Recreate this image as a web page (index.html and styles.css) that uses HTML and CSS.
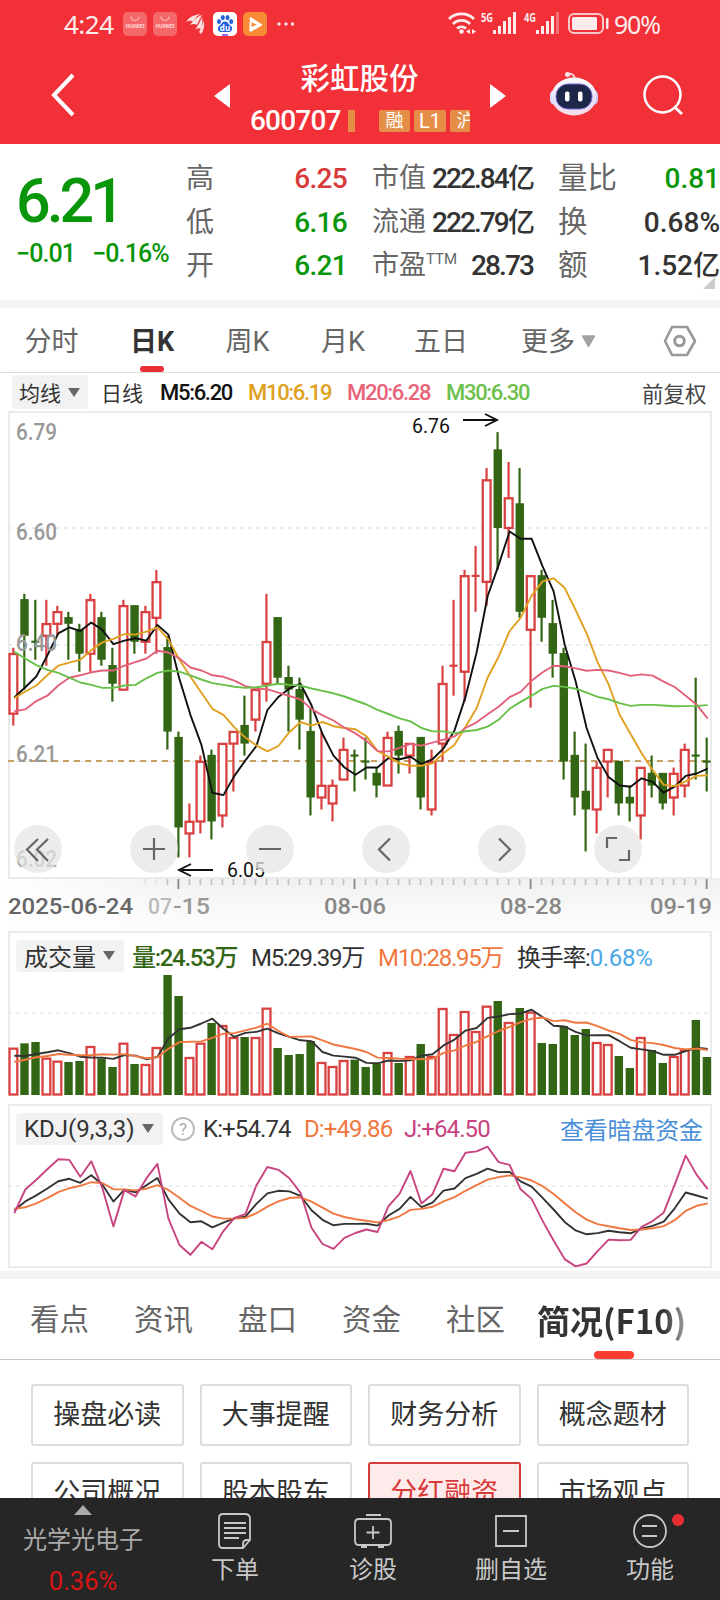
FILE: index.html
```html
<!DOCTYPE html>
<html lang="zh-CN">
<head>
    <meta charset="UTF-8">
    <meta name="viewport" content="width=device-width, initial-scale=1.0">
    <title>彩虹股份 600707</title>
    <link rel="stylesheet" href="styles.css">
</head>
<body>
    <header class="header">
        <!-- 状态栏 -->
        <div class="status">
            <span class="time">4:24</span>
            <svg class="app" width="24" height="24"><rect width="24" height="24" rx="5" fill="#f5686a"/><path d="M8 4.500a4 4 0 0 0 8 0" fill="none" stroke="#fbb" stroke-width="1.200"/><text x="12" y="16" font-size="5" font-weight="bold" text-anchor="middle" textLength="19" lengthAdjust="spacingAndGlyphs" fill="#fdd">HUAWEI</text></svg>
            <svg class="app" width="24" height="24"><rect width="24" height="24" rx="5" fill="#f5686a"/><path d="M8 4.500a4 4 0 0 0 8 0" fill="none" stroke="#fbb" stroke-width="1.200"/><text x="12" y="16" font-size="5" font-weight="bold" text-anchor="middle" textLength="19" lengthAdjust="spacingAndGlyphs" fill="#fdd">HUAWEI</text></svg>
            <svg class="app" width="24" height="24" fill="#fde3e3"><path d="M3 10Q7 3 18 2Q12 5 10 9Q6 8 3 10zM7 13Q12 5 19 3Q16 8 14 13Q11 11 7 13zM12 18Q17 11 19 5Q20 9 18 17Q15 15 12 18zM16 20Q20 14 20 8Q23 15 18 22z"/></svg>
            <svg class="app" width="24" height="24"><rect width="24" height="24" rx="5" fill="#fff"/><g fill="#2260dc"><ellipse cx="6" cy="9.500" rx="2" ry="2.600"/><ellipse cx="9.800" cy="5.600" rx="2" ry="2.600"/><ellipse cx="14.500" cy="5.600" rx="2" ry="2.600"/><ellipse cx="18.200" cy="9.500" rx="2" ry="2.600"/><path d="M12 9.500c3 0 3.500 3 6 4.500 2 2 1 6-2 6H8c-3 0-4-4-2-6 2.500-1.500 3-4.500 6-4.500z"/></g><text x="12" y="18.500" font-size="8" font-weight="bold" text-anchor="middle" fill="#fff">du</text><path d="M9 23h6" stroke="#7a3bdc" stroke-width="1.500"/></svg>
            <svg class="app" width="24" height="24"><rect width="24" height="24" rx="5" fill="#f98a36"/><path d="M7.500 6v3l8 3.500-8 4v2.500l11-6.200z" fill="#fff" stroke="#fff" stroke-width="1.500" stroke-linejoin="round"/><path d="M7.500 10v9" stroke="#fff" stroke-width="2"/></svg>
            <svg class="more" width="20" height="24" fill="#fde3e3"><circle cx="3" cy="12" r="1.700"/><circle cx="10" cy="12" r="1.700"/><circle cx="16.500" cy="12" r="1.700"/></svg>
            <svg class="signals" width="162" height="26" fill="#fdecec">
                <g fill="none" stroke="#fdecec" stroke-width="2.800"><path d="M1 8a18 18 0 0 1 25 0M5 13a12 12 0 0 1 17 0M9 17.500a7 7 0 0 1 9 0"/></g>
                <circle cx="13.500" cy="20.500" r="2.300"/><path d="M18 20.500l4-2.500v5zM28 20.500l-4-2.500v5z"/>
                <text x="33" y="10.500" font-size="12.500" font-weight="bold" textLength="12" lengthAdjust="spacingAndGlyphs">5G</text>
                <rect x="45" y="19" width="3" height="4"/><rect x="50" y="15" width="3" height="8"/><rect x="55" y="10" width="3" height="13"/><rect x="60" y="6" width="3" height="17"/><rect x="65" y="1" width="3" height="22"/>
                <text x="76" y="10.500" font-size="12.500" font-weight="bold" textLength="12" lengthAdjust="spacingAndGlyphs">4G</text>
                <rect x="88" y="19" width="3" height="4"/><rect x="93" y="15" width="3" height="8"/><rect x="98" y="10" width="3" height="13"/><rect x="103" y="5" width="3" height="18"/><rect x="108" y="1" width="3" height="22" opacity=".35"/>
                <rect x="121" y="3" width="34" height="19" rx="5" fill="none" stroke="#fbc8c8" stroke-width="2"/><rect x="124" y="6" width="25" height="13" rx="1.500"/><rect x="158" y="7" width="2.500" height="11" rx="1"/>
            </svg>
            <span class="battery">90%</span>
        </div>
        <!-- 标题 -->
        <div class="titlebar">
            <svg class="back" width="24" height="44" fill="none" stroke="#fff" stroke-width="4"><path d="M22 2L3 22L22 42"/></svg>
            <svg class="prev" width="16" height="24" fill="#fff"><path d="M16 0v24L0 12z"/></svg>
            <div class="title">
                <div class="name">彩虹股份</div>
                <div class="code"><span>600707</span><i></i><b class="tag t1">融</b><b class="tag t2">L1</b><b class="tag t3">沪</b></div>
            </div>
            <svg class="next" width="16" height="24" fill="#fff"><path d="M0 0v24l16-12z"/></svg>
            <svg class="robot" width="48" height="46">
                <defs><linearGradient id="rb" x2="0" y2="1"><stop stop-color="#fff"/><stop offset=".6" stop-color="#e4e0fb"/><stop offset="1" stop-color="#f6dfe6"/></linearGradient></defs>
                <path d="M18 3q6-1 7 5" fill="none" stroke="#f7d3dd" stroke-width="2"/><circle cx="17.500" cy="3.500" r="2.500" fill="#fde6ea"/>
                <rect x="0" y="19" width="10" height="15" rx="5" fill="#d9deff"/><rect x="38" y="19" width="10" height="15" rx="5" fill="#cfc6f8"/>
                <ellipse cx="24" cy="25.500" rx="22.500" ry="19" fill="url(#rb)"/>
                <rect x="6" y="13" width="36" height="25" rx="12" fill="#1d2748" stroke="#7769d8" stroke-width="1"/>
                <rect x="15" y="20.500" width="4.500" height="10" rx="2" fill="#fff"/><rect x="28" y="20.500" width="4.500" height="10" rx="2" fill="#fff"/>
            </svg>
            <svg class="search" width="42" height="42" fill="none" stroke="#fff" stroke-width="2.500"><circle cx="19.500" cy="19.500" r="18"/><path d="M31 31.500L39 39" stroke-width="3"/></svg>
        </div>
    </header>

    <!-- 行情 -->
    <section class="quote">
        <div class="price down">
            <div class="now">6.21</div>
            <div class="diff"><span>−0.01</span><span>−0.16%</span></div>
        </div>
        <dl class="stats s1">
            <div><dt>高</dt><dd class="up">6.25</dd></div>
            <div><dt>低</dt><dd class="down">6.16</dd></div>
            <div><dt>开</dt><dd class="down">6.21</dd></div>
        </dl>
        <dl class="stats s2">
            <div><dt>市值</dt><dd>222.84<em>亿</em></dd></div>
            <div><dt>流通</dt><dd>222.79<em>亿</em></dd></div>
            <div><dt>市盈<sup>TTM</sup></dt><dd>28.73</dd></div>
        </dl>
        <dl class="stats s3">
            <div><dt>量比</dt><dd class="down">0.81</dd></div>
            <div><dt>换</dt><dd>0.68%</dd></div>
            <div><dt>额</dt><dd>1.52<em>亿</em></dd></div>
        </dl>
        <svg class="corner" width="12" height="12"><path d="M12 0v12H0z" fill="#ccc"/></svg>
    </section>

    <nav class="periods">
        <span>分时</span>
        <span class="active">日K</span>
        <span>周K</span>
        <span>月K</span>
        <span>五日</span>
        <span class="drop">更多<svg width="15" height="13"><path d="M1.500 1h12L7.500 11.500z" fill="#a3a3a3" stroke="#a3a3a3" stroke-width="1.500" stroke-linejoin="round"/></svg></span>
        <span class="gear"><svg width="34" height="32" fill="none" stroke="#999" stroke-width="2.600" stroke-linejoin="round"><path d="M9 2h15l8 14-8 14H9L2 16z"/><circle cx="16.500" cy="16" r="4.800" stroke-width="3"/></svg></span>
    </nav>

    <!-- K线 -->
    <div class="legend main">
        <span class="chip">均线<svg width="12" height="9"><path d="M0 0h12L6 9z" fill="#666"/></svg></span>
        <span class="l1">日线</span>
        <span class="l2">M5:6.20</span>
        <span class="l3">M10:6.19</span>
        <span class="l4">M20:6.28</span>
        <span class="l5">M30:6.30</span>
        <span class="right">前复权</span>
    </div>
    <div class="kline">
        <svg id="kline" width="720" height="519" viewBox="0 411 720 519"></svg>
        <div class="tools">
            <svg viewBox="0 0 48 48"><path d="M24 14L13 24.500L24 36M34 14L23 24.500L34 36"/></svg>
            <svg viewBox="0 0 48 48"><path d="M13 24h22M24 13v22"/></svg>
            <svg viewBox="0 0 48 48"><path d="M13 24h22"/></svg>
            <svg viewBox="0 0 48 48"><path d="M28 13.500L17 24.500L28 35.500"/></svg>
            <svg viewBox="0 0 48 48"><path d="M21 13.500L32 24.500L21 35.500"/></svg>
            <svg viewBox="0 0 48 48"><path d="M13 23V13h10M35 25v10H25"/></svg>
        </div>
    </div>

    <!-- 成交量 -->
    <div class="panel volume">
        <div class="legend">
            <span class="chip">成交量<svg width="12" height="9"><path d="M0 0h12L6 9z" fill="#666"/></svg></span>
            <span class="v1">量:24.53万</span>
            <span class="v2">M5:29.39万</span>
            <span class="v3">M10:28.95万</span>
            <span class="v4">换手率:<em>0.68%</em></span>
        </div>
        <svg id="volume" width="720" height="125" viewBox="0 972 720 125"></svg>
    </div>

    <div class="panel kdj">
        <div class="legend">
            <span class="chip">KDJ(9,3,3)<svg width="12" height="9"><path d="M0 0h12L6 9z" fill="#666"/></svg></span>
            <span class="help">?</span>
            <span class="k1">K:+54.74</span>
            <span class="k2">D:+49.86</span>
            <span class="k3">J:+64.50</span>
            <span class="link">查看暗盘资金</span>
        </div>
        <svg id="kdj" width="720" height="123" viewBox="0 1144 720 123"></svg>
    </div>

    <nav class="sections">
        <span>看点</span><span>资讯</span><span>盘口</span><span>资金</span><span>社区</span><span class="active">简况(F10)</span>
    </nav>

    <div class="topics">
        <a>操盘必读</a><a>大事提醒</a><a>财务分析</a><a>概念题材</a>
        <a>公司概况</a><a>股本股东</a><a class="active">分红融资</a><a>市场观点</a>
    </div>

    <footer class="footer">
        <div class="board"><svg width="18" height="10"><path d="M9 0l9 10H0z" fill="#aaa"/></svg><span>光学光电子</span><strong>0.36%</strong></div>
        <div class="item"><svg width="36" height="38"><path d="M6 2h22q5 0 5 5v21l-7 8H6q-4 0-4-4V6q0-4 4-4zM33 28h-3q-4 0-4 4v4M7 11h22M7 16h22M7 21h22M7 26h15"/></svg><span>下单</span></div>
        <div class="item"><svg width="40" height="38"><path d="M13 3h15M6 7h28q4 0 4 4v18q0 4-4 4H6q-4 0-4-4V11q0-4 4-4zM20 14v13M13.500 20.500h13M8 35h6M25 35h6"/></svg><span>诊股</span></div>
        <div class="item"><svg width="36" height="38"><path d="M3 4h30v30H3zM10 19h16"/></svg><span>删自选</span></div>
        <div class="item"><svg width="36" height="38"><circle cx="18" cy="19" r="16"/><path d="M10 14h15M10 24h15"/></svg><i class="dot"></i><span>功能</span></div>
    </footer>

    <script src="chart.js"></script>
</body>
</html>
```
FILE: styles.css
```css
* {
    box-sizing: border-box;
}

body {
    margin: 0;
    width: 720px;
    height: 1600px;
    overflow: hidden;
    position: relative;
    background: #fff;
    color: #333;
    font-family: Roboto, "Noto Sans CJK SC", sans-serif;
}

svg {
    display: block;
    flex: none;
}

em, i {
    font-style: normal;
}

.up { color: #d83a3a; }
.down { color: #0a960a; }

/* 顶部 */
.header {
    height: 144px;
    background: #f23038;
    color: #fff;
}

.status {
    display: flex;
    align-items: center;
    height: 48px;
    padding-left: 64px;
    color: #fdecec;
    font-family: "Noto Sans", sans-serif;
}

.time {
    width: 59px;
    font-size: 26px;
    letter-spacing: -0.5px;
}

.app { margin-right: 6px; }
.more { margin-left: 3px; }
.signals { margin-left: 152px; }

.battery {
    margin-left: 4px;
    font-size: 25px;
    letter-spacing: -1.2px;
}

.titlebar {
    display: flex;
    height: 96px;
}

.back { margin: 25px 0 0 51px; }
.prev { margin: 36px 0 0 139px; }

.title {
    width: 220px;
    margin-left: 20px;
    overflow: hidden;
}

.name {
    height: 59px;
    line-height: 63px;
    font-size: 29.500px;
    font-weight: 500;
    text-align: center;
    text-indent: -1px;
}

.code {
    display: flex;
    width: 240px;
    height: 27px;
    align-items: center;
    font-size: 28px;
    font-weight: 500;
    letter-spacing: -0.8px;
}

.code span { width: 98px; }

.code i {
    width: 7px;
    height: 22px;
    margin-right: 24px;
    background: #e58e48;
}

.tag {
    height: 22px;
    margin-right: 4px;
    background: #e58e48;
    border-radius: 2px;
    font-size: 18px;
    font-weight: 400;
    line-height: 22px;
    text-align: center;
    letter-spacing: 0;
}

.t1 { width: 31px; }
.t2 { width: 32px; font-size: 20px; }
.t3 { width: 31px; }
.next { margin: 36px 0 0 20px; }
.robot { margin: 23px 0 0 44px; }
.search { margin: 27px 0 0 45px; }

/* 行情 */
.quote {
    display: flex;
    position: relative;
    height: 164px;
    border-bottom: 8px solid #f4f4f4;
}

.price {
    width: 186px;
    padding: 25px 0 0 16px;
    white-space: nowrap;
}

.now {
    height: 64px;
    line-height: 64px;
    font-size: 61px;
    font-weight: 500;
    letter-spacing: -4px;
}

.diff {
    display: flex;
    gap: 17px;
    height: 38px;
    line-height: 41px;
    font-size: 25px;
    font-weight: 500;
    letter-spacing: -0.9px;
}

.stats {
    margin: 13px 0 0;
}

.stats div {
    display: flex;
    justify-content: space-between;
    height: 43.500px;
    line-height: 43px;
    white-space: nowrap;
}

.stats dt {
    color: #666;
    font-size: 28px;
}

.stats dd {
    margin: 0;
    font-size: 28px;
    font-weight: 500;
    letter-spacing: -0.7px;
}

.s1 { width: 161px; }

.s2 {
    width: 161px;
    margin-left: 25px;
}

.s2 dt { font-size: 27px; }
.s2 dd { letter-spacing: -1.9px; }

.s3 {
    width: 162px;
    margin-left: 25px;
}

.s3 dt { font-size: 29.500px; }
.s3 dd { letter-spacing: 0; }

.stats em { font-size: 27px; }

sup {
    font-size: 15px;
    line-height: 1;
    vertical-align: 10px;
}

.corner {
    position: absolute;
    left: 703px;
    bottom: 11px;
}

/* 周期 */
.periods {
    display: grid;
    grid-template-columns: 103px 98px 93px 98px 98px 155px 75px;
    height: 65px;
    border-bottom: 1px solid #ddd;
    line-height: 69px;
    font-size: 27px;
    text-align: center;
    color: #666;
}

.periods .active {
    color: #333;
    font-weight: 700;
}

.periods .active::after {
    content: "";
    display: block;
    width: 24px;
    height: 6px;
    margin: -11px auto 0;
    border-radius: 3px;
    background: #e62e33;
}

.drop {
    display: flex;
    align-items: center;
    gap: 6px;
    padding-left: 31px;
}

.gear {
    display: flex;
    align-items: center;
    padding-left: 18px;
}

.drop svg, .gear svg { margin-bottom: 3px; }

/* 指标行 */
.legend {
    display: flex;
    align-items: center;
    white-space: nowrap;
    font-size: 24px;
    letter-spacing: -1.300px;
}

.chip {
    display: flex;
    align-items: center;
    justify-content: space-between;
    flex: none;
    padding: 0 9px 0 8px;
    border-radius: 4px;
    background: #f2f2f2;
    letter-spacing: 0;
}

.main {
    height: 38px;
    padding-left: 12px;
    font-size: 22px;
    color: #111;
}

.main .chip {
    width: 76px;
    height: 34px;
    padding: 0 8px 0 7px;
    font-size: 21px;
    color: #333;
}

.l1 { width: 72px; padding-left: 13px; font-size: 21px; letter-spacing: 0; color: #333; }
.l2, .l3, .l4, .l5 { font-weight: 500; }
.l2 { width: 88px; }
.l3 { width: 99px; color: #e0a020; }
.l4 { width: 99px; color: #e8647a; }
.l5 { width: 96px; color: #6cbf4a; }
.main .right { margin-left: 100px; font-size: 21.500px; letter-spacing: 0; color: #444; }

.kline {
    position: relative;
    height: 520px;
}

/* 浮在K线上的按钮 */
.tools {
    position: absolute;
    left: 14px;
    top: 414px;
    display: flex;
    gap: 68px;
}

.tools svg {
    width: 48px;
    height: 48px;
    border-radius: 50%;
    background: rgba(230, 230, 230, 0.750);
    fill: none;
    stroke: #666;
    stroke-width: 2.200;
}

.panel .legend {
    height: 41px;
    margin: 0 8px;
    padding: 6px 0 0 6px;
    border: 2px solid #ebebeb;
    border-bottom: 0;
}

.panel .chip { height: 32px; }
.volume { height: 173px; }
.volume .chip { width: 108px; }
.v1 { width: 119px; padding-left: 8px; color: #336614; font-weight: 500; }
.v2 { width: 127px; padding-left: 8px; }
.v3 { width: 147px; padding-left: 8px; color: #f07840; }
.v4 em { color: #4aa8e8; letter-spacing: -0.3px; }

.kdj { height: 167px; }

.kdj .chip {
    width: 147px;
    letter-spacing: 0;
}

.help {
    width: 24px;
    height: 24px;
    margin: 0 8px 0 8px;
    border: 2px solid #bbb;
    border-radius: 50%;
    font-size: 17px;
    line-height: 20px;
    text-align: center;
    color: #aaa;
    letter-spacing: 0;
}

.panel .k1, .k2, .k3 { letter-spacing: -0.900px; }
.k1 { width: 101px; }
.k2 { width: 100px; color: #f07840; }
.k3 { width: 156px; color: #c8437f; }
.link { color: #4a90d9; letter-spacing: -0.200px; }

/* 资料 */
.sections {
    display: flex;
    height: 89px;
    border-top: 8px solid #f4f4f4;
    border-bottom: 1px solid #c8c8c8;
    padding-left: 30px;
    line-height: 83px;
    font-size: 29.500px;
    color: #666;
    white-space: nowrap;
}

.sections span { width: 104px; }

.sections .active {
    width: 154px;
    margin-left: -13px;
    font-family: "Noto Sans CJK SC", sans-serif;
    font-size: 33px;
    font-weight: 700;
    letter-spacing: 0;
    color: transparent;
    background: linear-gradient(90deg, #333 82%, #bbb 100%) text;
    position: relative;
}

.sections .active::after {
    content: "";
    position: absolute;
    left: 57px;
    bottom: 0;
    width: 40px;
    height: 8px;
    border-radius: 4px;
    background: #fa3c32;
}

.topics {
    display: grid;
    grid-template-columns: repeat(4, 152.500px);
    grid-auto-rows: 62px;
    gap: 16px;
    padding: 24px 0 0 31px;
}

.topics a {
    border: 2px solid #ddd;
    border-radius: 3px;
    font-size: 27px;
    line-height: 59px;
    text-align: center;
}

.topics .active {
    border-color: #d83a3a;
    background: #fdeaea;
    color: #d83a3a;
}

/* 底部 */
.footer {
    position: absolute;
    left: 0;
    top: 1498px;
    display: grid;
    grid-template-columns: 166px 138px 138px 138px 140px;
    width: 720px;
    height: 102px;
    background: #262626;
    font-size: 24px;
    color: #c8c8c8;
}

.board, .item {
    position: relative;
    display: flex;
    flex-direction: column;
    align-items: center;
}

.board { padding-top: 7px; }

.board span {
    margin-top: 7px;
    line-height: 36px;
    color: #aaa;
}

.board strong {
    margin-top: 5px;
    line-height: 37px;
    font-weight: 400;
    font-size: 25.500px;
    color: #d81414;
}

.item { padding-top: 14px; }

.item svg {
    fill: none;
    stroke: #c8c8c8;
    stroke-width: 1.800;
}

.item span {
    margin-top: 2px;
    line-height: 37px;
}

.dot {
    position: absolute;
    left: 92px;
    top: 16px;
    width: 12px;
    height: 12px;
    border-radius: 50%;
    background: #e62e33;
}
```
FILE: chart.js
```javascript
// 开, 收, 高, 低 (单位: 分, 6元以上部分)
const candles = [
    [29,39,40,27],[48,42,49,33],[41,41,48,38],[42,44,48,37],[44,46,47,42],[45,44,46,38],[43,39,44,36],[39,48,49,36],
    [45,38,46,37],[37,34,40,31],[33,47,48,33],[47,41,47,39],[41,46,47,39],[45,51,53,39],[40,26,42,23],[25,10,26,5],
    [9,11,14,5],[11,21,22,9],[22,11,23,8],[12,24,24,10],[24,26,26,16],[27,24,32,22],[28,33,33,26],[34,41,49,31],
    [45,35,45,34],[35,33,37,26],[33,28,35,23],[26,15,30,12],[15,17,26,13],[14,17,18,11],[18,23,25,18],[22,22,23,16],
    [21,21,25,18],[19,17,20,15],[17,25,26,17],[26,22,27,19],[22,24,24,19],[25,15,25,13],[13,21,23,12],[24,34,37,21],
    [37,37,48,32],[36,52,53,31],[52,52,57,46],[51,68,70,47],[73,60,76,53],[60,65,71,55],[64,46,70,45],[43,52,52,30],
    [52,45,53,41],[44,39,48,35],[39,21,40,18],[22,15,26,12],[16,13,24,6],[13,20,21,9],[21,23,23,15],[21,14,21,12],
    [15,14,17,11],[12,20,20,8],[19,17,22,15],[19,14,19,13],[15,19,20,12],[17,23,24,15],[22,22,35,18],[21,21,25,16]
];
const volumes = [
    142,155,159,112,103,99,102,147,110,84,157,93,93,144,360,297,114,157,216,210,174,174,174,262,141,120,123,162,99,87,105,106,
    84,94,129,96,117,153,117,261,183,252,192,268,282,219,261,250,156,153,207,180,198,159,153,117,81,174,135,96,117,138,225,114
];

const RED = '#d94040', GREEN = '#336614';
const close = candles.map(c => c[1]);
const x = i => 13.3 + i * 11.006;
const y = p => 857.4 - (p - 5) * 5.99;

function isUp(i) {
    const [o, c] = candles[i];
    if (o !== c) return c > o;
    return i > 0 && c >= close[i - 1];
}

// 均线, seed 是窗口不足时的前几个值
function average(data, n, seed) {
    return data.map((v, i) => {
        if (i < seed.length) return seed[i];
        let sum = 0;
        for (let k = i - n + 1; k <= i; k++) sum += data[k];
        return sum / n;
    });
}

function line(values, scale, color) {
    const points = values.map((v, i) => `${(x(i) + 1).toFixed(1)},${scale(v).toFixed(1)}`).join(' ');
    return `<polyline points="${points}" fill="none" stroke="${color}" stroke-width="1.9" stroke-linejoin="round"/>`;
}

function box(i, top, height, up) {
    if (up) return `<rect x="${x(i) - 3.8}" y="${top + 1}" width="7.800" height="${Math.max(height - 2, 0.5)}" fill="#fff" stroke="${RED}" stroke-width="2.300"/>`;
    return `<rect x="${x(i) - 4}" y="${top}" width="8.400" height="${Math.max(height, 2)}" fill="${GREEN}"/>`;
}

function grid(yy) {
    return `<path d="M8 ${yy}H711" stroke="#e8e8e8" stroke-width="1.500" stroke-dasharray="4 4"/>`;
}

function label(text, lx, ly, width, color, size) {
    return `<text x="${lx}" y="${ly}" font-size="${size}" textLength="${width}" lengthAdjust="spacingAndGlyphs" fill="${color}">${text}</text>`;
}

function drawKline() {
    let s = `<defs>
        <linearGradient id="fade" x2="0" y2="1"><stop stop-color="#f0f0f0"/><stop offset=".7" stop-color="#fafafa"/><stop offset="1" stop-color="#fcfcfc"/></linearGradient>
        <linearGradient id="side"><stop stop-color="#fff"/><stop offset="1" stop-color="#fff" stop-opacity="0"/></linearGradient>
    </defs>
    <rect x="0" y="878" width="720" height="52" fill="url(#fade)"/>
    <rect x="0" y="878" width="200" height="52" fill="url(#side)"/>
    <rect x="9" y="412" width="702" height="466" fill="none" stroke="#ebebeb" stroke-width="2"/>`;
    s += grid(528) + grid(644.7) + grid(761.5);
    s += '<path d="M8 761H711" stroke="#c8a064" stroke-width="1.800" stroke-dasharray="6 5"/>';
    candles.forEach(([o, c, h, l], i) => {
        const up = isUp(i);
        const top = y(Math.max(o, c)), bottom = y(Math.min(o, c));
        s += `<path d="M${x(i)} ${y(h)}V${y(l)}" stroke="${up ? RED : GREEN}" stroke-width="2.200"/>`;
        s += bottom > top ? box(i, top - 0.7, bottom - top + 0.7 + up, up) :
            `<path d="M${x(i) - 4} ${top}h8" stroke="${up ? RED : GREEN}" stroke-width="2.200"/>`;
    });
    s += line(average(close, 5, [31.7, 33.4, 35.2, 38.7]), y, '#111');
    s += line(average(close, 10, [31.6, 32.7, 33.7, 35.4, 37, 37.5, 38, 39.6, 40.9]), y, '#e0a020');
    s += line(average(close, 20, [29.4, 29.7, 31.1, 32, 33.7, 35, 35.4, 35.9, 36.2, 36.2, 37, 37.6, 38.2, 39.5, 39.2, 38.2, 36.7, 36.2, 35.4]), y, '#e2607a');
    s += line(average(close, 30, [39.3, 38.2, 37.1, 36.3, 35.8, 35, 34.2, 33.8, 33.3, 33.3, 33.7, 33.8, 34.9, 35.8, 36.2, 36, 35.4, 34.7, 34.1, 33.8, 33.5, 33.3, 33.4, 33.7, 34, 33.8, 33.7, 33.2, 32.8]), y, '#68c048');
    s += '<g font-weight="500">';
    [['6.79', 440], ['6.60', 540], ['6.40', 651], ['6.21', 762], ['6.02', 867]].forEach(([t, ly]) => {
        s += label(t, 16, ly, 41, '#999', 23);
    });
    s += '</g>';
    s += label('6.76', 412, 433, 38, '#111', 21) + label('6.05', 227, 876.500, 38, '#111', 21);
    s += '<path d="M463 420H497M485 414l12 6-12 6M213 870H179M191 864l-12 6 12 6" fill="none" stroke="#111" stroke-width="1.900"/>';
    // 时间轴
    for (let i = 12; i < 64; i++) {
        const major = i % 16 === 15;
        s += `<path d="M${x(i)} 879v${major ? 10 : 6}" stroke="${major ? '#888' : i < 14 ? '#e4e4e4' : '#c4c4c4'}" stroke-width="1.800"/>`;
    }
    s += '<g font-weight="500">' + label('2025-06-24', 8, 914, 125, '#666', 22) + label('07', 148, 914, 24, '#bbb', 22) + label('-15', 173, 914, 37, '#999', 22)
        + label('08-06', 324, 914, 62, '#888', 22) + label('08-28', 500, 914, 62, '#888', 22) + label('09-19', 650, 914, 62, '#888', 22) + '</g>';
    document.getElementById('kline').innerHTML = s;
}

function drawVolume() {
    const scale = v => 1095 - v / 3;
    let s = '<path d="M9 972V1096M711 972V1096" stroke="#ebebeb" stroke-width="2"/>' + grid(1013);
    volumes.forEach((v, i) => {
        s += box(i, scale(v), v / 3 + (isUp(i) ? 0.5 : 0), isUp(i));
    });
    s += line(average(volumes, 5, [118, 117, 123, 128]), scale, '#333');
    s += line(average(volumes, 10, [100, 106, 113, 117, 123, 121, 119, 119, 122]), scale, '#f07840');
    document.getElementById('volume').innerHTML = s;
}

function drawKdj() {
    const K = [42.9, 52, 58.1, 65.3, 72.8, 75.3, 71.1, 78.9];
    const D = [44.4, 45.9, 50, 55.4, 61.5, 65.6, 68, 71.7];
    for (let i = 8; i < candles.length; i++) {
        const win = candles.slice(i - 8, i + 1);
        const high = Math.max(...win.map(c => c[2]));
        const low = Math.min(...win.map(c => c[3]));
        const rsv = (close[i] - low) / (high - low) * 100;
        K[i] = (K[i - 1] * 2 + rsv) / 3;
        D[i] = (D[i - 1] * 2 + K[i]) / 3;
    }
    const scale = v => 1197.7 + (54.74 - v) * 0.97;
    let s = '<path d="M9 1143V1266H711V1143" fill="none" stroke="#ebebeb" stroke-width="2"/>' + grid(1185);
    s += line(K, scale, '#333') + line(D, scale, '#f07840') + line(K.map((k, i) => 3 * k - 2 * D[i]), scale, '#c8437f');
    document.getElementById('kdj').innerHTML = s;
}

drawKline();
drawVolume();
drawKdj();
```
